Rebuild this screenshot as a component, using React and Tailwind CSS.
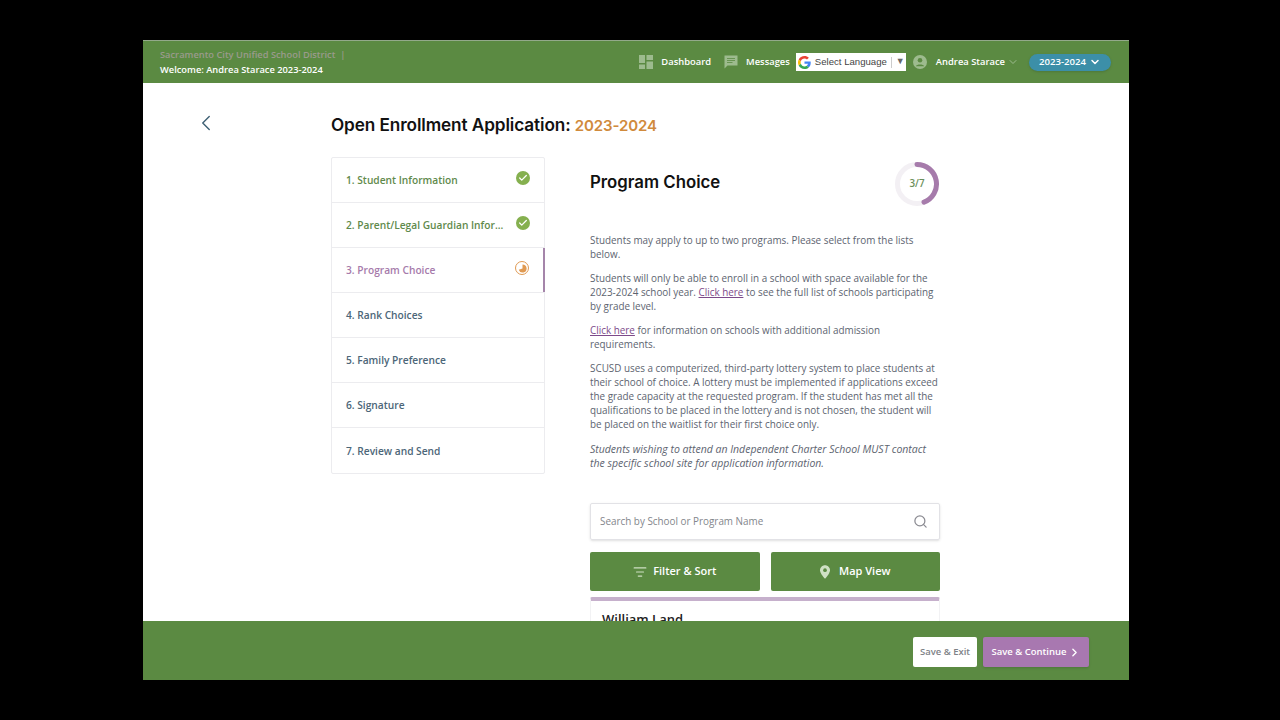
import { ChevronDown, ChevronLeft, ChevronRight, Check, Search, ListFilter } from 'lucide-react';

const steps = [
  { label: '1. Student Information', color: 'text-[#5f8a4c]', status: 'done' },
  { label: '2. Parent/Legal Guardian Infor...', color: 'text-[#5f8a4c]', status: 'done' },
  { label: '3. Program Choice', color: 'text-[#a67bab]', status: 'active' },
  { label: '4. Rank Choices', color: 'text-[#4c6678]' },
  { label: '5. Family Preference', color: 'text-[#4c6678]' },
  { label: '6. Signature', color: 'text-[#4c6678]' },
  { label: '7. Review and Send', color: 'text-[#4c6678]' },
];

function GoogleG() {
  return (
    <svg viewBox="0 0 48 48" className="w-[13px] h-[13px] shrink-0">
      <path fill="#EA4335" d="M24 9.500c3.500 0 6.700 1.200 9.200 3.600l6.900-6.900C35.900 2.400 30.400 0 24 0 14.600 0 6.500 5.400 2.600 13.200l8 6.200C12.500 13.700 17.800 9.500 24 9.500z" />
      <path fill="#4285F4" d="M46.900 24.500c0-1.600-.1-3.100-.4-4.500H24v9h12.900c-.6 3-2.200 5.500-4.700 7.200l7.700 6c4.500-4.200 7-10.300 7-17.700z" />
      <path fill="#FBBC05" d="M10.600 28.600c-.5-1.500-.8-3-.8-4.600s.3-3.100.8-4.600l-8-6.200C.9 16.500 0 20.100 0 24s.9 7.500 2.600 10.800l8-6.200z" />
      <path fill="#34A853" d="M24 48c6.500 0 11.900-2.100 15.900-5.800l-7.700-6c-2.200 1.500-4.900 2.300-8.200 2.300-6.200 0-11.500-4.200-13.400-9.900l-8 6.200C6.500 42.600 14.600 48 24 48z" />
    </svg>
  );
}

function DashIcon() {
  return (
    <svg viewBox="0 0 14 14" className="w-[14px] h-[14px] shrink-0" fill="#9dbb8e">
      <rect x="0" y="0" width="6" height="8" />
      <rect x="7.500" y="0" width="6.500" height="5" />
      <rect x="0" y="9.500" width="6" height="4.500" />
      <rect x="7.500" y="6.500" width="6.500" height="7.500" />
    </svg>
  );
}

function MessageIcon() {
  return (
    <svg viewBox="0 0 14 14" className="w-[14px] h-[14px] shrink-0">
      <path d="M0.500 0.500 H13.500 V10.500 H3.500 L0.500 13.500 Z" fill="#9dbb8e" />
      <path d="M3 3.500 H11 M3 5.500 H11 M3 7.500 H8.500" stroke="#5b8a42" strokeWidth="0.800" />
    </svg>
  );
}

function AvatarIcon() {
  return (
    <svg viewBox="0 0 14 14" className="w-[14px] h-[14px] shrink-0">
      <circle cx="7" cy="7" r="7" fill="#9dbb8e" />
      <circle cx="7" cy="5.200" r="2.300" fill="#5b8a42" />
      <path d="M2.800 11.200 C3.500 8.800 10.500 8.800 11.200 11.200 Z" fill="#5b8a42" />
    </svg>
  );
}

function PinIcon() {
  return (
    <svg viewBox="0 0 12 16" className="w-[10px] h-[14px] shrink-0">
      <path d="M6 0 C2.700 0 0 2.600 0 5.800 C0 9.800 6 16 6 16 C6 16 12 9.800 12 5.800 C12 2.600 9.300 0 6 0 Z" fill="#cfe0c4" />
      <circle cx="6" cy="5.800" r="2.200" fill="#5b8a42" />
    </svg>
  );
}

function ProgressRing() {
  return (
    <div className="relative w-[46px] h-[46px]">
      <svg viewBox="0 0 46 46" className="w-full h-full">
        <circle cx="23" cy="23" r="19.500" fill="none" stroke="#f3f0f4" strokeWidth="5" />
        <path d="M23 3.500 A19.500 19.500 0 0 1 30 41.200" fill="none" stroke="#a67bab" strokeWidth="5" strokeLinecap="round" />
      </svg>
      <span className="absolute inset-0 flex items-center justify-center text-[9.800px] font-semibold text-[#6b8f5a]">3/7</span>
    </div>
  );
}

function StepRow({ step, last }) {
  return (
    <div className={`relative h-[45px] flex items-center pl-[14px] ${last ? '' : 'border-b border-[#ececef]'}`}>
      <span className={`text-[10.200px] leading-[16px] font-semibold ${step.color}`}>{step.label}</span>
      {step.status === 'done' && (
        <span className="absolute right-[14px] top-[13px] w-[14px] h-[14px] rounded-full bg-[#85b04f] flex items-center justify-center">
          <Check className="w-[10px] h-[10px] text-white" strokeWidth={3} />
        </span>
      )}
      {step.status === 'active' && (
        <>
          <span className="absolute right-[15px] top-[13px] w-[14px] h-[14px] rounded-full border border-[#e09a52] flex items-center justify-center">
            <svg viewBox="0 0 10 10" className="w-[9px] h-[9px]">
              <path d="M5 0.500 A4.500 4.500 0 1 1 0.800 6.500 L5 5 Z" fill="#e09a52" />
            </svg>
          </span>
          <span className="absolute right-[-1px] top-0 bottom-0 w-[2px] bg-[#a585aa]" />
        </>
      )}
    </div>
  );
}

export default function App() {
  return (
    <div className="w-[1280px] h-[720px] bg-black py-[40px] pl-[143px] pr-[151px] font-['Open_Sans',sans-serif] overflow-hidden">
      <div className="h-[640px] bg-white flex flex-col overflow-hidden">
        {/* top bar */}
        <header className="h-[43px] shrink-0 bg-[#5b8a42] border-t border-[#93a98a] flex items-center pl-[17px] pr-[18px] text-white">
          <div className="flex flex-col gap-[2px]">
            <span className="text-[9.300px] leading-[13px] font-semibold text-[#9a9a8c]">Sacramento City Unified School District &nbsp;|</span>
            <span className="text-[9.300px] leading-[13px] font-semibold">Welcome: Andrea Starace 2023-2024</span>
          </div>
          <div className="ml-auto flex items-center text-[9.400px] font-semibold">
            <DashIcon />
            <span className="ml-[8px]">Dashboard</span>
            <span className="ml-[13px]"><MessageIcon /></span>
            <span className="ml-[8px]">Messages</span>
            <div className="ml-[6px] w-[110px] h-[18px] bg-white flex items-center pl-[2px] font-['Liberation_Sans',sans-serif] font-normal text-[#444] text-[9.600px] whitespace-nowrap">
              <GoogleG />
              <span className="ml-[4px]">Select Language</span>
              <span className="ml-[4px] h-[11px] border-l border-[#ccc]" />
              <span className="ml-[4px] text-[9px] text-[#666]">▼</span>
            </div>
            <span className="ml-[7px]"><AvatarIcon /></span>
            <span className="ml-[9px]">Andrea Starace</span>
            <ChevronDown className="w-[12px] h-[12px] ml-[2px] text-[#9dbb8e]" />
            <button className="ml-[10px] w-[82px] h-[17px] rounded-full bg-[#3c8fa8] flex items-center justify-center gap-[3px] text-white text-[9.600px] font-semibold shadow-sm">
              2023-2024
              <ChevronDown className="w-[12px] h-[12px]" strokeWidth={3} />
            </button>
          </div>
        </header>

        {/* main */}
        <main className="flex-1 overflow-hidden flex">
          <div className="w-[188px] shrink-0 pt-[27px] pl-[50px]">
            <ChevronLeft className="w-[26px] h-[26px] text-[#3d5f73]" strokeWidth={1.300} />
          </div>
          <div className="w-[610px]">
            <h1 className="mt-[31px] h-[22px] text-[17.200px] leading-[22px] font-semibold text-[#111] font-['Inter',sans-serif] tracking-[-0.1px]">
              Open Enrollment Application: <span className="text-[15px] text-[#d08a3c]">2023-2024</span>
            </h1>
            <div className="mt-[21px] flex">
              <nav className="w-[214px] h-[317px] shrink-0 border border-[#ececef] rounded-[2px]">
                {steps.map((step, i) => (
                  <StepRow key={step.label} step={step} last={i === steps.length - 1} />
                ))}
              </nav>
              <section className="ml-[45px] w-[350px]">
                <div className="flex items-start justify-between h-[60px]">
                  <h2 className="mt-[14px] text-[16.800px] leading-[22px] font-semibold text-[#111] font-['Inter',sans-serif]">Program Choice</h2>
                  <div className="mt-[4px]"><ProgressRing /></div>
                </div>
                <div className="mt-[16px] text-[#5d6470] text-[9.880px] leading-[14px] flex flex-col gap-[10px]">
                  <p>Students may apply to up to two programs. Please select from the lists below.</p>
                  <p>Students will only be able to enroll in a school with space available for the 2023-2024 school year. <span className="text-[#7d4a8a] underline">Click here</span> to see the full list of schools participating by grade level.</p>
                  <p><span className="text-[#7d4a8a] underline">Click here</span> for information on schools with additional admission requirements.</p>
                  <p>SCUSD uses a computerized, third-party lottery system to place students at their school of choice. A lottery must be implemented if applications exceed the grade capacity at the requested program. If the student has met all the qualifications to be placed in the lottery and is not chosen, the student will be placed on the waitlist for their first choice only.</p>
                  <p className="italic text-[10.500px] w-[345px] pt-[1px]">Students wishing to attend an Independent Charter School MUST contact the specific school site for application information.</p>
                </div>
                <div className="mt-[33px] h-[37px] border border-[#e2e2e6] rounded-[2px] shadow-sm flex items-center justify-between pl-[9px] pr-[11px]">
                  <span className="text-[9.900px] text-[#83868c]">Search by School or Program Name</span>
                  <Search className="w-[15px] h-[15px] text-[#8b8b92]" />
                </div>
                <div className="mt-[12px] flex gap-[11px]">
                  <button className="flex-1 h-[39px] rounded-[2px] bg-[#5b8a42] flex items-center justify-center gap-[6px] text-white text-[11px] font-semibold">
                    <ListFilter className="w-[14px] h-[14px] text-[#cfe0c4]" />
                    Filter &amp; Sort
                  </button>
                  <button className="flex-1 h-[39px] rounded-[2px] bg-[#5b8a42] flex items-center justify-center gap-[9px] text-white text-[11px] font-semibold">
                    <PinIcon />
                    Map View
                  </button>
                </div>
                <div className="mt-[6px] border-t-[4px] border-x border-x-[#f2f2f4] border-t-[#c6b0cc] rounded-t-[2px] pt-[10px] pl-[11px]">
                  <span className="text-[13px] leading-[16px] font-semibold text-[#222] block">William Land</span>
                </div>
              </section>
            </div>
          </div>
        </main>

        {/* bottom bar */}
        <footer className="h-[59px] shrink-0 bg-[#5b8a42] flex justify-end items-start pt-[16px] pr-[40px] gap-[6px]">
          <button className="w-[64px] h-[30px] rounded-[2px] bg-white text-[#7e8287] text-[9.500px] font-semibold">Save &amp; Exit</button>
          <button className="w-[106px] h-[30px] rounded-[2px] bg-[#a878b0] text-white text-[9.500px] font-semibold flex items-center justify-center gap-[1px] shadow-sm">
            Save &amp; Continue
            <ChevronRight className="w-[13px] h-[13px]" strokeWidth={2.500} />
          </button>
        </footer>
      </div>
    </div>
  );
}
